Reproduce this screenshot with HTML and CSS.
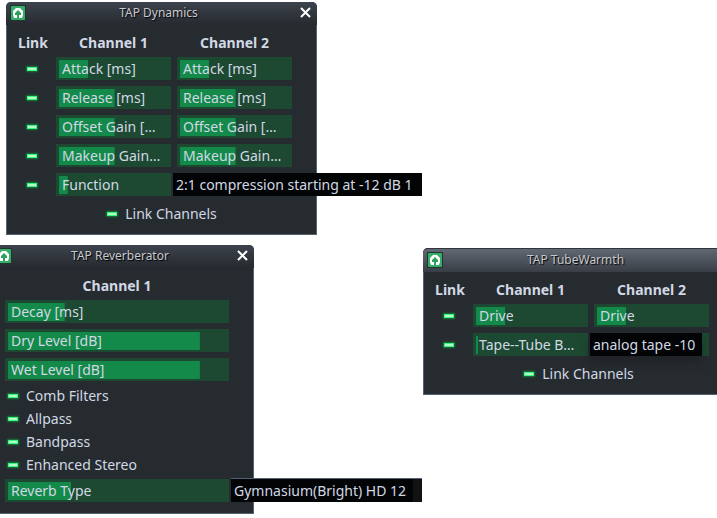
FILE: index.html
```html
<!DOCTYPE html>
<html lang="en">
<head>
<meta charset="utf-8">
<title>TAP plugins</title>
<link rel="stylesheet" href="styles.css">
</head>
<body>
<svg width="0" height="0" class="defs" aria-hidden="true">
  <symbol id="logo" viewBox="0 0 14 14">
    <rect width="14" height="14" rx="1" fill="#36ad69"/>
    <path d="M5 2H9L12 5V9L11 12H3L2 9V5Z" fill="#fff"/>
    <path d="M7 4 10 7V9H8V12H6V9H4V7Z" fill="#2f9f5f"/>
  </symbol>
  <symbol id="close" viewBox="0 0 11 11">
    <path d="M1 1 10 10M10 1 1 10" fill="none" stroke="#fff" stroke-width="2"/>
  </symbol>
</svg>
<main class="desktop">
  <section class="window dynamics">
    <header class="titlebar">
      <svg class="logo"><use href="#logo"/></svg>
      <h1>TAP Dynamics</h1>
      <button class="close" aria-label="Close"><svg><use href="#close"/></svg></button>
    </header>
    <div class="body linked">
      <h2>Link</h2><h2>Channel 1</h2><h2>Channel 2</h2>
      <input class="led" type="checkbox" checked aria-label="Link attack">
      <label class="knob"><input type="range" value="27" style="--fill:27%"><span>Attack [ms]</span></label>
      <label class="knob"><input type="range" value="27" style="--fill:27%"><span>Attack [ms]</span></label>
      <input class="led" type="checkbox" checked aria-label="Link release">
      <label class="knob"><input type="range" value="51" style="--fill:51%"><span>Release [ms]</span></label>
      <label class="knob"><input type="range" value="51" style="--fill:51%"><span>Release [ms]</span></label>
      <input class="led" type="checkbox" checked aria-label="Link offset gain">
      <label class="knob"><input type="range" value="51" style="--fill:51%"><span>Offset Gain […</span></label>
      <label class="knob"><input type="range" value="51" style="--fill:51%"><span>Offset Gain […</span></label>
      <input class="led" type="checkbox" checked aria-label="Link makeup gain">
      <label class="knob"><input type="range" value="51" style="--fill:51%"><span>Makeup Gain…</span></label>
      <label class="knob"><input type="range" value="51" style="--fill:51%"><span>Makeup Gain…</span></label>
      <input class="led" type="checkbox" checked aria-label="Link function">
      <div class="anchor">
        <label class="knob"><input type="range" value="8" style="--fill:8%"><span>Function</span></label>
        <output class="tip tip-function">2:1 compression starting at -12 dB 1</output>
      </div>
      <label class="check all"><input class="led" type="checkbox" checked>Link Channels</label>
    </div>
  </section>

  <section class="window reverb">
    <header class="titlebar">
      <svg class="logo"><use href="#logo"/></svg>
      <h1>TAP Reverberator</h1>
      <button class="close" aria-label="Close"><svg><use href="#close"/></svg></button>
    </header>
    <div class="body single">
      <h2>Channel 1</h2>
      <label class="knob"><input type="range" value="26" style="--fill:26%"><span>Decay [ms]</span></label>
      <label class="knob"><input type="range" value="88" style="--fill:88%"><span>Dry Level [dB]</span></label>
      <label class="knob"><input type="range" value="88" style="--fill:88%"><span>Wet Level [dB]</span></label>
      <div class="checks">
        <label class="check"><input class="led" type="checkbox" checked>Comb Filters</label>
        <label class="check"><input class="led" type="checkbox" checked>Allpass</label>
        <label class="check"><input class="led" type="checkbox" checked>Bandpass</label>
        <label class="check"><input class="led" type="checkbox" checked>Enhanced Stereo</label>
      </div>
      <div class="anchor">
        <label class="knob"><input type="range" value="29" style="--fill:29%"><span>Reverb Type</span></label>
        <output class="tip tip-reverb">Gymnasium(Bright) HD 12</output>
      </div>
    </div>
  </section>

  <section class="window tube active">
    <header class="titlebar">
      <svg class="logo"><use href="#logo"/></svg>
      <h1>TAP TubeWarmth</h1>
      <button class="close" aria-label="Close"><svg><use href="#close"/></svg></button>
    </header>
    <div class="body linked">
      <h2>Link</h2><h2>Channel 1</h2><h2>Channel 2</h2>
      <input class="led" type="checkbox" checked aria-label="Link drive">
      <label class="knob"><input type="range" value="27" style="--fill:27%"><span>Drive</span></label>
      <label class="knob"><input type="range" value="27" style="--fill:27%"><span>Drive</span></label>
      <input class="led" type="checkbox" checked aria-label="Link tape-tube blend">
      <div class="anchor">
        <label class="knob"><input type="range" value="2" style="--fill:2%"><span>Tape--Tube B…</span></label>
        <output class="tip tip-tube">analog tape -10</output>
      </div>
      <div class="knob"></div>
      <label class="check all"><input class="led" type="checkbox" checked>Link Channels</label>
    </div>
  </section>
</main>
</body>
</html>
```
FILE: styles.css
```css
* { box-sizing: border-box; }

body {
  margin: 0;
  background: #fff;
  color: #d1d8e4;
  font: 14px/18px "Noto Sans", sans-serif;
}

.defs { position: absolute; }

.desktop {
  position: relative;
  height: 100vh;
  overflow: hidden;
}

.window {
  position: absolute;
  border-radius: 5px 5px 0 0;
  background: #262b30;
}

.dynamics { left: 6px; top: 2px; width: 311px; }
.reverb { left: -8px; top: 245px; width: 262px; }
.tube { left: 423px; top: 248px; width: 311px; }

.titlebar {
  display: grid;
  grid-template-columns: 14px 1fr 11px;
  align-items: center;
  height: 23px;
  padding: 0 6px 2px 5px;
  border-radius: 5px 5px 0 0;
  background: linear-gradient(#3d434d, #262a2f);
}

.active .titlebar {
  height: 24px;
  border-top: 1px solid #30343c;
  background: linear-gradient(#626872, #383d46);
}

.logo {
  width: 14px;
  height: 14px;
  outline: 1px solid #20352e;
}

h1 {
  margin: 0;
  padding-right: 8px;
  color: #c5c9d0;
  font-size: 12px;
  font-weight: 400;
  text-align: center;
  text-shadow: 1px 1px 1px #000;
}

.close {
  display: flex;
  padding: 0;
  border: 0;
  background: none;
}

.close svg { width: 11px; height: 11px; }

.body {
  display: grid;
  gap: 6px;
  border: 1px solid #536373;
  border-top: 0;
}

.linked {
  grid-template-columns: 34px 1fr 1fr;
  padding: 9px 24px 9px 9px;
}

.single { padding: 9px 24px 11px 12px; }

h2 {
  margin: 0 0 -1px;
  font-size: 14px;
  font-weight: 700;
  line-height: 18px;
  text-align: center;
}

.led {
  appearance: none;
  place-self: center start;
  width: 10px;
  height: 4px;
  margin: 0 0 0 11px;
  border: 1px solid #3af57c;
  background: #b4ffcb;
  box-shadow: 0 0 2px 1px #167c3e;
}

.knob {
  display: grid;
  height: 23px;
  padding: 3px 3px 2px;
  background: #1d4932;
}

.knob input,
.knob span { grid-area: 1 / 1; }

.knob input {
  appearance: none;
  width: 100%;
  height: 18px;
  margin: 0;
  background: linear-gradient(#138a49, #138a49) no-repeat 0 0 / var(--fill) 100%;
}

.knob input::-webkit-slider-thumb {
  appearance: none;
  width: 1px;
  height: 18px;
}

.knob span {
  z-index: 1;
  padding-left: 3px;
  white-space: nowrap;
  pointer-events: none;
}

.check {
  display: flex;
  align-items: center;
  gap: 8px;
  height: 23px;
}

.check .led {
  align-self: center;
  margin: 0;
}

.all {
  grid-column: 1 / -1;
  justify-self: center;
  padding-left: 16px;
}

.checks {
  margin: -3px 0;
  padding-left: 3px;
}

.anchor { position: relative; }
.linked .anchor { grid-column: 2; }

.tip {
  position: absolute;
  z-index: 2;
  top: 0;
  left: calc(100% + 2px);
  height: 23px;
  padding: 3px;
  background: #030406;
  box-shadow: 0 4px 12px #0004;
  line-height: 18px;
  white-space: nowrap;
}

.tip-function { width: 249px; box-shadow: none; }
.tip-reverb { width: 191px; border-right: 9px solid #111214; box-shadow: 0 -1px #536373; }
.tip-tube { width: 112px; }
```
